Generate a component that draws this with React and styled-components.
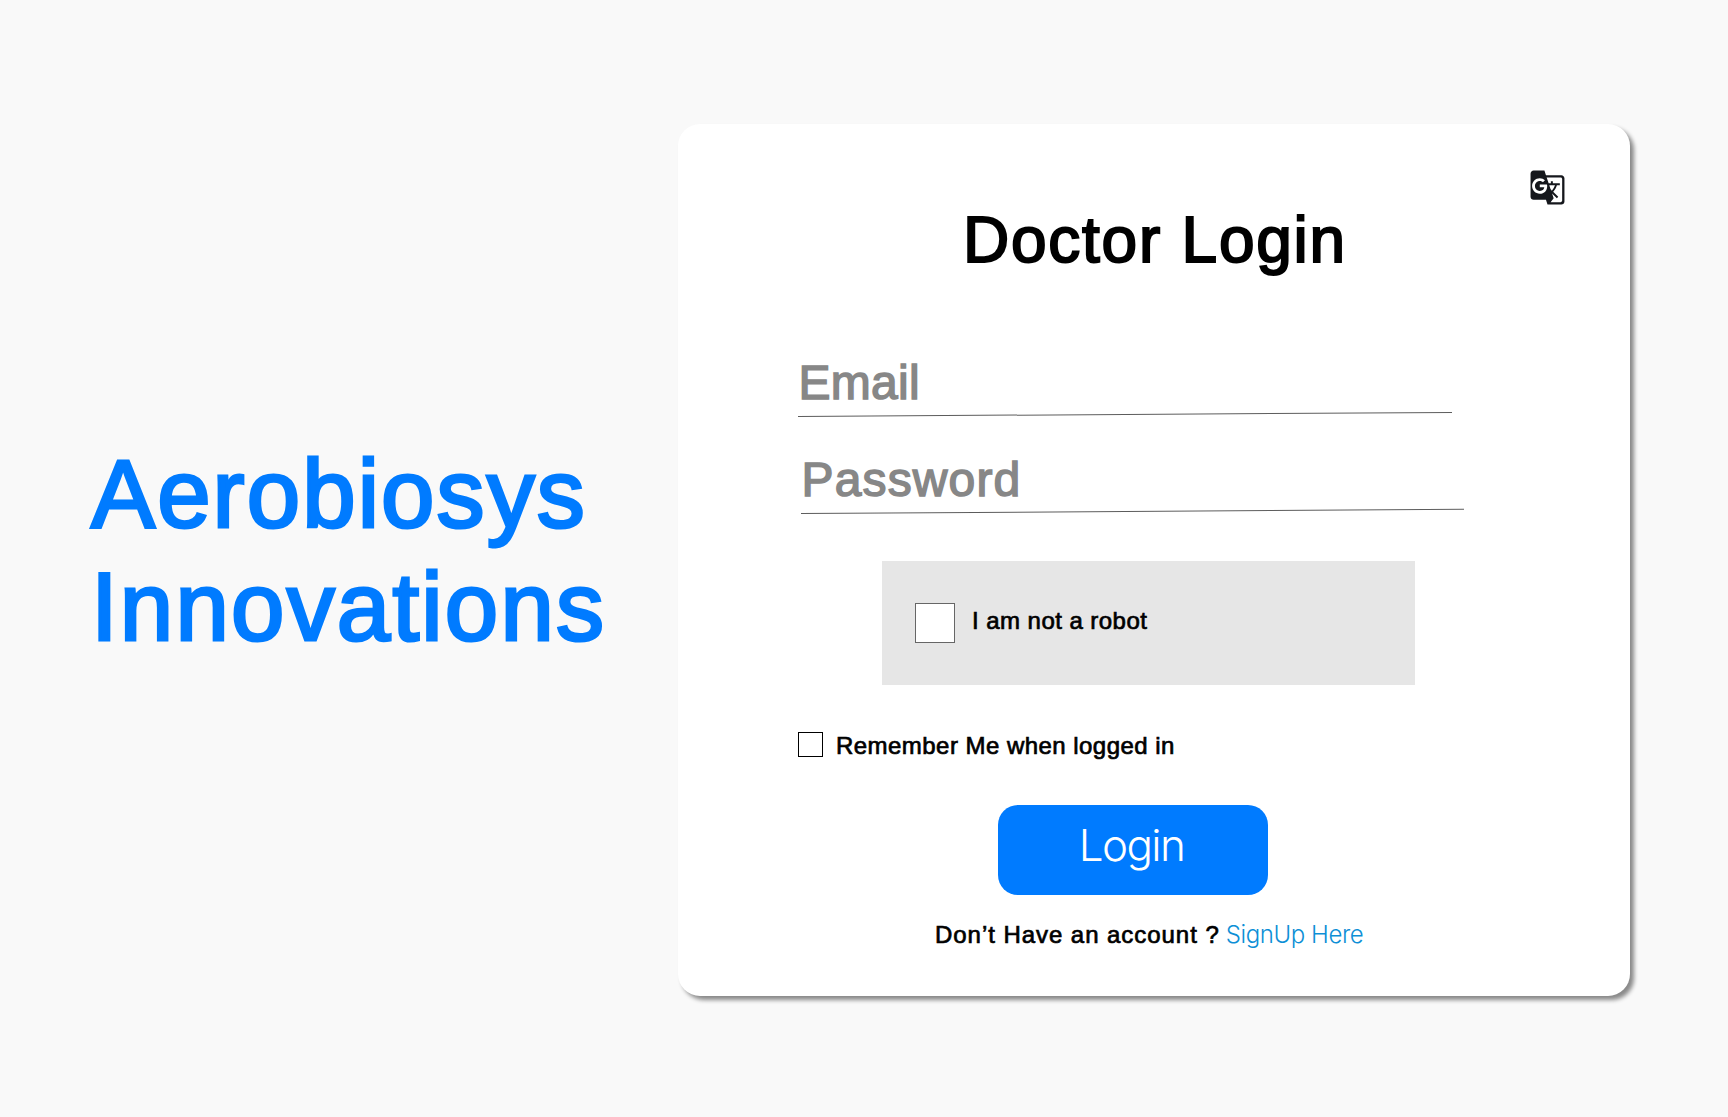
import React from "react";
import styled, { createGlobalStyle } from "styled-components";
import { MdGTranslate } from "react-icons/md";

const GlobalStyle = createGlobalStyle`
  * { box-sizing: border-box; }
  body {
    margin: 0;
    background: #f9f9f9;
    font-family: "Liberation Sans", Arial, sans-serif;
    color: #000;
  }
`;

const Page = styled.main`
  display: flex;
  align-items: flex-start;
  width: 1728px;
  height: 1117px;
  overflow: hidden;
  background: #f9f9f9;
`;

const Brand = styled.h1`
  display: flex;
  flex-direction: column;
  width: 678px;
  margin: 0;
  padding: 437px 0 0 91px;
  font-size: 96px;
  font-weight: 400;
  line-height: 113px;
  color: #007bff;
  -webkit-text-stroke: 3px #007bff;
  white-space: nowrap;
`;

const BrandLine = styled.span`
  letter-spacing: ${(p) => p.$spacing}px;
`;

const Card = styled.section`
  display: flex;
  flex-direction: column;
  width: 952px;
  height: 872px;
  margin-top: 124px;
  padding: 45px 64px 0 120px;
  border-radius: 22px;
  background: #fff;
  box-shadow: 4px 4px 4px rgba(0, 0, 0, 0.45);
`;

const LanguageButton = styled.button`
  display: flex;
  align-self: flex-end;
  padding: 0;
  border: 0;
  background: none;
  color: #15171c;
  font-size: 37px;
`;

const Title = styled.h2`
  margin: 4px 0 0 165px;
  font-size: 64px;
  font-weight: 400;
  line-height: 60px;
  letter-spacing: 1.75px;
  white-space: nowrap;
  -webkit-text-stroke: 2px #000;
`;

const Field = styled.label`
  display: flex;
  flex-direction: column;
  gap: 6px;
  width: ${(p) => p.$width}px;
  margin: ${(p) => p.$top}px 0 0 ${(p) => p.$indent}px;
`;

const FieldLabel = styled.span`
  padding-left: ${(p) => p.$inset}px;
  font-size: 48px;
  line-height: 57px;
  margin-bottom: -1px;
  letter-spacing: ${(p) => p.$spacing}px;
  color: #878787;
  -webkit-text-stroke: 1.5px #878787;
`;

const Underline = styled.span`
  height: 1px;
  background: #5c5c5c;
  transform: rotate(-0.36deg);
  transform-origin: left center;
`;

const Captcha = styled.div`
  display: flex;
  align-items: flex-start;
  gap: 17px;
  width: 533px;
  height: 124px;
  margin: 47px 0 0 84px;
  padding: 42px 0 0 33px;
  background: #e6e6e6;
`;

const Checkbox = styled.span`
  flex: none;
  width: ${(p) => p.$size}px;
  height: ${(p) => p.$size}px;
  border: 1px solid ${(p) => p.$border};
  background: #fff;
`;

const Caption = styled.span`
  font-size: 24px;
  line-height: ${(p) => p.$line}px;
  letter-spacing: ${(p) => p.$spacing}px;
  white-space: nowrap;
  -webkit-text-stroke: 0.7px #000;
`;

const Remember = styled.label`
  display: flex;
  gap: 13px;
  height: 25px;
  margin-top: 47px;
`;

const LoginButton = styled.button`
  width: 270px;
  height: 90px;
  margin: 48px 0 0 200px;
  padding: 0 3px 10px 0;
  border: 0;
  border-radius: 20px;
  background: #007bff;
  color: #fff;
  font-family: Inter, "Liberation Sans", sans-serif;
  font-size: 44px;
  font-weight: 300;
  line-height: 80px;
  letter-spacing: -1.6px;
`;

const SignUp = styled.p`
  display: flex;
  align-items: baseline;
  gap: 6px;
  margin: 25px 0 0 137px;
  line-height: 30px;
`;

const SignUpLink = styled.a`
  font-family: Inter, "Liberation Sans", sans-serif;
  font-size: 24px;
  font-weight: 300;
  letter-spacing: -0.4px;
  color: #0d8fd6;
  white-space: nowrap;
`;

export default function App() {
  return (
    <>
      <GlobalStyle />
      <Page>
        <Brand>
          <BrandLine $spacing={2.1}>Aerobiosys</BrandLine>
          <BrandLine $spacing={2.2}>Innovations</BrandLine>
        </Brand>
        <Card>
          <LanguageButton aria-label="Language">
            <MdGTranslate />
          </LanguageButton>
          <Title>Doctor Login</Title>
          <Field $width={654} $top={84} $indent={0}>
            <FieldLabel $inset={0.5} $spacing={0.3}>Email</FieldLabel>
            <Underline />
          </Field>
          <Field $width={663} $top={34} $indent={3}>
            <FieldLabel $inset={0.5} $spacing={1.15}>Password</FieldLabel>
            <Underline />
          </Field>
          <Captcha>
            <Checkbox $size={40} $border="#666" />
            <Caption $line={36} $spacing={0.45}>I am not a robot</Caption>
          </Captcha>
          <Remember>
            <Checkbox $size={25} $border="#000" />
            <Caption $line={27} $spacing={0.46}>Remember Me when logged in</Caption>
          </Remember>
          <LoginButton>Login</LoginButton>
          <SignUp>
            <Caption $line={30} $spacing={0.95}>Don’t Have an account ?</Caption>
            <SignUpLink>SignUp Here</SignUpLink>
          </SignUp>
        </Card>
      </Page>
    </>
  );
}
